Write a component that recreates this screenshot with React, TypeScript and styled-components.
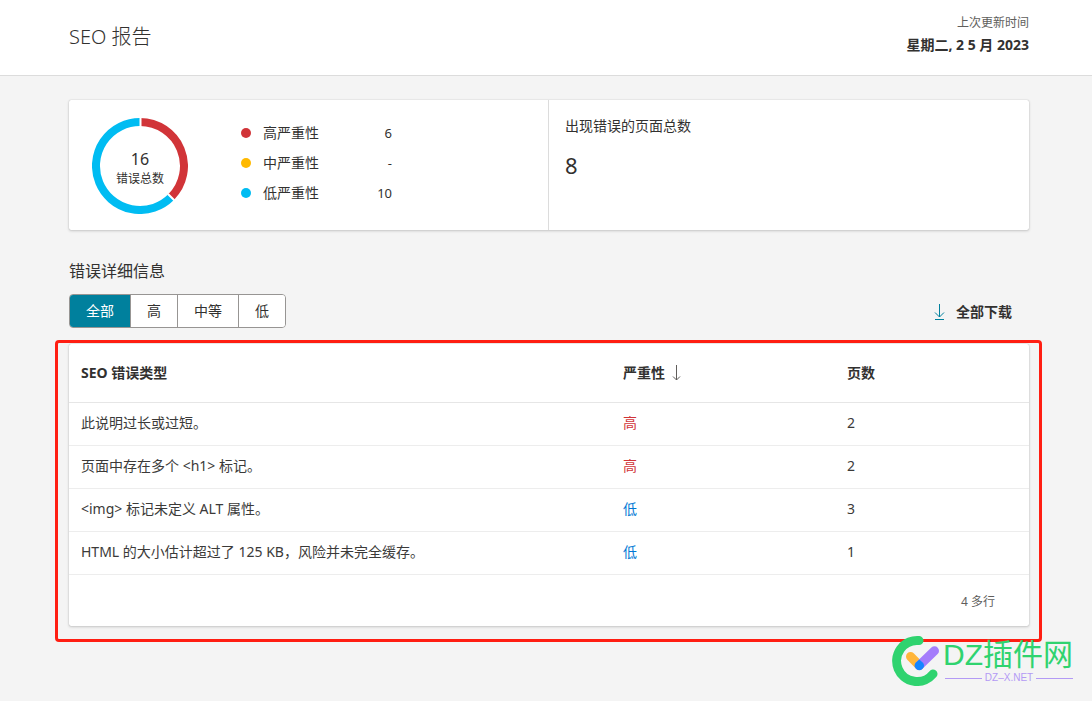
import React from "react";
import styled, { createGlobalStyle } from "styled-components";

const GlobalStyle = createGlobalStyle`
  *, *::before, *::after { box-sizing: border-box; }
  body {
    margin: 0;
    background: #f4f4f4;
    color: #323130;
    font-family: "Noto Sans", "Noto Sans CJK SC", sans-serif;
    font-size: 14px;
    line-height: 20px;
  }
  h1, h2, h3, p, dl, dd { margin: 0; font-weight: 400; }
  button { font: inherit; color: inherit; cursor: pointer; }
`;

const Page = styled.div`
  position: relative;
  min-height: 100vh;
`;

const Header = styled.header`
  display: flex;
  justify-content: space-between;
  height: 76px;
  padding: 13px 63px 0 69px;
  background: #fff;
  border-bottom: 1px solid #dcdcdc;
`;

const Title = styled.h1`
  padding-top: 10px;
  font-size: 20px;
  font-weight: 300;
  line-height: 28px;
`;

const Updated = styled.div`
  text-align: right;
`;

const UpdatedLabel = styled.p`
  color: #605e5c;
  font-size: 12px;
`;

const UpdatedDate = styled.p`
  padding-top: 2px;
  font-weight: 700;
`;

const Main = styled.main`
  padding: 24px 63px 59px 69px;
`;

const Card = styled.section`
  background: #fff;
  border-radius: 2px;
  box-shadow: 0 0 1px rgba(0, 0, 0, 0.3), 0 1px 3px rgba(0, 0, 0, 0.18);
`;

const Summary = styled(Card)`
  display: grid;
  grid-template-columns: 1fr 1fr;
  height: 130px;
`;

const Totals = styled.div`
  display: flex;
  align-items: center;
  padding: 2px 0 0 23px;
  border-right: 1px solid #dcdcdc;
`;

const Donut = styled.div`
  display: grid;
  width: 96px;
  height: 96px;
  > * { grid-area: 1 / 1; }
`;

const DonutText = styled.div`
  align-self: center;
  padding-top: 6px;
  text-align: center;
  font-size: 12px;
`;

const DonutValue = styled.div`
  font-size: 16px;
`;

const Legend = styled.dl`
  display: grid;
  gap: 10px;
  width: 151px;
  margin-left: 53px;
  padding-bottom: 6px;
`;

const LegendRow = styled.div`
  display: flex;
  justify-content: space-between;
  dt { display: flex; align-items: center; gap: 12px; }
  dd { font-size: 13px; }
`;

const Dot = styled.span<{ $color: string }>`
  width: 10px;
  height: 10px;
  border-radius: 50%;
  background: ${(p) => p.$color};
`;

const PagesTotal = styled.div`
  padding: 16px 16px 0;
`;

const PagesLabel = styled.h3`
  font-size: 14px;
  line-height: 20px;
`;

const PagesValue = styled.p`
  padding-top: 15px;
  font-size: 22px;
  line-height: 28px;
`;

const SectionTitle = styled.h2`
  margin-top: 29px;
  font-size: 16px;
  line-height: 24px;
`;

const Toolbar = styled.div`
  display: flex;
  align-items: center;
  justify-content: space-between;
  margin: 11px 0 12px;
  padding-right: 17px;
`;

const Segments = styled.div`
  display: flex;
  height: 34px;
  overflow: hidden;
  border: 1px solid #979593;
  border-radius: 4px;
`;

const Segment = styled.button<{ $active?: boolean }>`
  padding: 0 16px;
  border: 0;
  background: ${(p) => (p.$active ? "#00809d" : "#fff")};
  color: ${(p) => (p.$active ? "#fff" : "#323130")};
  & + & { border-left: 1px solid #979593; }
`;

const Download = styled.button`
  display: flex;
  align-items: center;
  gap: 10px;
  padding: 2px 0 0;
  border: 0;
  background: none;
  font-weight: 700;
`;

const Highlight = styled.div`
  margin: 0 -13px 0 -14px;
  padding: 1px 10px 13px 11px;
  border: 3px solid #ff1e12;
  border-radius: 4px;
`;

const Table = styled.table`
  width: 100%;
  table-layout: fixed;
  border-collapse: collapse;
  text-align: left;
`;

const HeadCell = styled.th<{ $width?: number }>`
  width: ${(p) => (p.$width ? `${p.$width}px` : "auto")};
  height: 58px;
  padding: 0 12px;
  border-bottom: 1px solid #e6e6e6;
  font-weight: 700;
`;

const SortButton = styled.button`
  display: flex;
  align-items: center;
  gap: 6px;
  padding: 0;
  border: 0;
  background: none;
`;

const Cell = styled.td<{ $color?: string }>`
  height: 43px;
  padding: 0 12px 2px;
  border-bottom: 1px solid #ededed;
  color: ${(p) => p.$color ?? "#3b3a39"};
`;

const RowCount = styled.p`
  padding: 17px 34px 14px;
  text-align: right;
  color: #605e5c;
  font-size: 12px;
`;

const Watermark = styled.a`
  position: absolute;
  right: 19px;
  top: 636px;
  display: flex;
  gap: 1px;
  text-decoration: none;
  font-family: "Liberation Sans", "Noto Sans CJK SC", sans-serif;
`;

const WatermarkName = styled.div`
  padding-top: 1px;
  color: #2fd36f;
  font-size: 30px;
  line-height: 36px;
  white-space: nowrap;
`;

const WatermarkDomain = styled.div`
  display: flex;
  align-items: center;
  gap: 3px;
  padding-left: 2px;
  color: #b39af5;
  font-size: 10px;
  line-height: 10px;
  &::before, &::after {
    content: "";
    flex: 1;
    height: 1px;
    background: #b39af5;
  }
`;

const legend = [
  { label: "高严重性", value: "6", color: "#d13438" },
  { label: "中严重性", value: "-", color: "#ffb900" },
  { label: "低严重性", value: "10", color: "#00bcf2" },
];

const HIGH = "#d13438";
const LOW = "#0078d4";

const errors = [
  { type: "此说明过长或过短。", severity: "高", color: HIGH, pages: 2 },
  { type: "页面中存在多个 <h1> 标记。", severity: "高", color: HIGH, pages: 2 },
  { type: "<img> 标记未定义 ALT 属性。", severity: "低", color: LOW, pages: 3 },
  { type: "HTML 的大小估计超过了 125 KB，风险并未完全缓存。", severity: "低", color: LOW, pages: 1 },
];

const filters = ["全部", "高", "中等", "低"];

function DonutChart() {
  return (
    <svg width="96" height="96" viewBox="0 0 96 96" fill="none" strokeWidth="8" aria-hidden="true">
      <path d="M79.1 79.1A44 44 0 1 1 48 4" stroke="#00bcf2" />
      <path d="M48 4A44 44 0 0 1 79.1 79.1" stroke="#d13438" />
      <path d="M48.5 0V9M76 76L83 83" stroke="#fff" strokeWidth="2" />
    </svg>
  );
}

export default function App() {
  const [active, setActive] = React.useState(filters[0]);
  return (
    <Page>
      <GlobalStyle />
      <Header>
        <Title>SEO 报告</Title>
        <Updated>
          <UpdatedLabel>上次更新时间</UpdatedLabel>
          <UpdatedDate>星期二, 2 5 月 2023</UpdatedDate>
        </Updated>
      </Header>
      <Main>
        <Summary>
          <Totals>
            <Donut>
              <DonutChart />
              <DonutText>
                <DonutValue>16</DonutValue>
                错误总数
              </DonutText>
            </Donut>
            <Legend>
              {legend.map((item) => (
                <LegendRow key={item.label}>
                  <dt>
                    <Dot $color={item.color} />
                    {item.label}
                  </dt>
                  <dd>{item.value}</dd>
                </LegendRow>
              ))}
            </Legend>
          </Totals>
          <PagesTotal>
            <PagesLabel>出现错误的页面总数</PagesLabel>
            <PagesValue>8</PagesValue>
          </PagesTotal>
        </Summary>

        <SectionTitle>错误详细信息</SectionTitle>
        <Toolbar>
          <Segments role="group" aria-label="严重性">
            {filters.map((name) => (
              <Segment
                key={name}
                type="button"
                $active={name === active}
                aria-pressed={name === active}
                onClick={() => setActive(name)}
              >
                {name}
              </Segment>
            ))}
          </Segments>
          <Download type="button">
            <svg width="13" height="17" viewBox="0 0 13 17" fill="none" stroke="#00809d" aria-hidden="true">
              <path d="M6.5 0V13M2 8.5L6.5 13L11 8.5M2 15.5H11" />
            </svg>
            全部下载
          </Download>
        </Toolbar>

        <Highlight>
          <Card>
            <Table>
              <thead>
                <tr>
                  <HeadCell scope="col">SEO 错误类型</HeadCell>
                  <HeadCell scope="col" $width={224}>
                    <SortButton type="button">
                      严重性
                      <svg width="11" height="16" viewBox="0 0 11 16" fill="none" stroke="#605e5c" aria-hidden="true">
                        <path d="M5.5 0V15M2 11.5L5.5 15L9 11.5" />
                      </svg>
                    </SortButton>
                  </HeadCell>
                  <HeadCell scope="col" $width={194}>页数</HeadCell>
                </tr>
              </thead>
              <tbody>
                {errors.map((row) => (
                  <tr key={row.type}>
                    <Cell>{row.type}</Cell>
                    <Cell $color={row.color}>{row.severity}</Cell>
                    <Cell>{row.pages}</Cell>
                  </tr>
                ))}
              </tbody>
            </Table>
            <RowCount>4 多行</RowCount>
          </Card>
        </Highlight>
      </Main>

      <Watermark href="#">
        <svg width="50" height="50" viewBox="0 0 50 50" fill="none" strokeWidth="9" strokeLinecap="round" aria-hidden="true">
          <path d="M27 4.6A20.5 20.5 0 1 0 41 38" stroke="#2fd36f" />
          <path d="M18.5 20.5L27.3 29.5" stroke="#ffb53a" />
          <path d="M42.5 14.8L27.3 29.5" stroke="#a47cfb" />
          <path d="M27.3 23.4L31.2 27A4.6 4.6 0 1 1 23.4 27Z" fill="#1485ff" />
        </svg>
        <div>
          <WatermarkName>DZ插件网</WatermarkName>
          <WatermarkDomain>DZ–X.NET</WatermarkDomain>
        </div>
      </Watermark>
    </Page>
  );
}
